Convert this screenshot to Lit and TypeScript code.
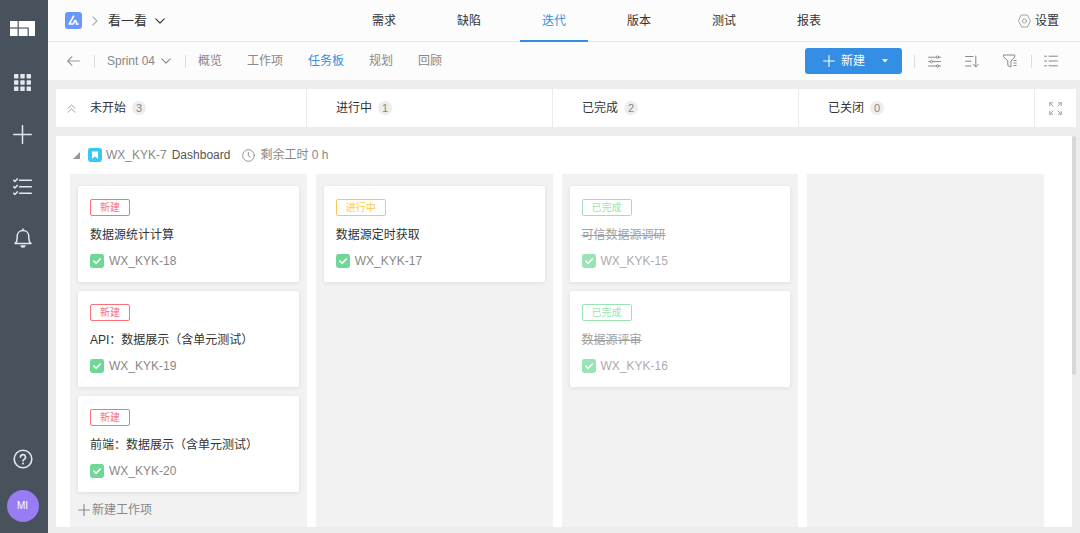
import { LitElement, html, svg, css, nothing } from "lit";
import { customElement, property, state } from "lit/decorators.js";
import { classMap } from "lit/directives/class-map.js";

type Status = "todo" | "doing" | "done";

interface Task {
  key: string;
  title: string;
  status: Status;
}

interface Column {
  name: string;
  tasks: Task[];
}

const STATUS_LABEL: Record<Status, string> = {
  todo: "新建",
  doing: "进行中",
  done: "已完成",
};

const COLUMNS: Column[] = [
  {
    name: "未开始",
    tasks: [
      { key: "WX_KYK-18", title: "数据源统计计算", status: "todo" },
      { key: "WX_KYK-19", title: "API：数据展示（含单元测试）", status: "todo" },
      { key: "WX_KYK-20", title: "前端：数据展示（含单元测试）", status: "todo" },
    ],
  },
  {
    name: "进行中",
    tasks: [{ key: "WX_KYK-17", title: "数据源定时获取", status: "doing" }],
  },
  {
    name: "已完成",
    tasks: [
      { key: "WX_KYK-15", title: "可信数据源调研", status: "done" },
      { key: "WX_KYK-16", title: "数据源评审", status: "done" },
    ],
  },
  { name: "已关闭", tasks: [] },
];

const icon = (w: number, h: number, body: unknown, stroke = 1) => html`
  <svg width=${w} height=${h} viewBox="0 0 ${w} ${h}" fill="none" stroke="currentColor"
    stroke-width=${stroke} stroke-linecap="round" stroke-linejoin="round" aria-hidden="true">${body}</svg>`;

const icons = {
  logo: icon(25, 15, svg`
    <g fill="currentColor" stroke="none">
      <path d="M0 0H7.6V6.4H0z"/><path d="M8.8 0H25V15H18.8V6.4H8.8z"/>
      <path d="M0 7.6H7.6V15H0z"/><path d="M8.8 7.6H17.6V15H8.8z"/>
    </g>`),
  apps: icon(17, 17, svg`
    <g fill="currentColor" stroke="none">
      ${[0, 6.3, 12.6].map((y) => [0, 6.3, 12.6].map((x) => svg`<rect x=${x} y=${y} width="4.4" height="4.4" rx="0.6"/>`))}
    </g>`),
  plus: icon(19, 19, svg`<path d="M9.5 .7V18.3M.7 9.5H18.3"/>`, 1.5),
  checklist: icon(19, 17, svg`
    <path d="M6.5 2.3H18.3M6.5 8.8H18.3M6.5 15.3H18.3"/>
    <path d="M.7 2.2L1.9 3.4L4.2 .9M.7 8.7L1.9 9.9L4.2 7.4M.7 15.2L1.9 16.4L4.2 13.9"/>`, 1.5),
  bell: icon(18, 20, svg`
    <path d="M1 15.6C2.8 14.2 3.2 12.6 3.2 10V8.4C3.2 5 5.6 2.6 9 2.6S14.8 5 14.8 8.4V10C14.8 12.6 15.2 14.2 17 15.6Z"/>
    <path d="M9 2.4V1"/><path d="M6.4 17.2H11.6A2.6 2.5 0 0 1 6.4 17.2Z" fill="currentColor" stroke="none"/>`, 1.5),
  help: icon(20, 20, svg`
    <circle cx="10" cy="10" r="8.8"/>
    <path d="M7.5 8.2A2.5 2.5 0 1 1 11 10.4C10.2 10.8 10 11.1 10 12"/>
    <circle cx="10" cy="14.4" r="1" fill="currentColor" stroke="none"/>`, 1.6),
  product: html`<svg width="17" height="17" viewBox="0 0 17 17" aria-hidden="true">
    <rect width="17" height="17" rx="3" fill="#6698ff"/>
    <path d="M8.6 4.2L4.2 12H8.2L9.8 8.6C11.2 8.6 11.6 9.8 11.4 12H13" fill="none" stroke="#fff"
      stroke-width="1.7" stroke-linecap="round" stroke-linejoin="round"/></svg>`,
  chevronRight: icon(6, 10, svg`<path d="M.8 .8L5 5L.8 9.2"/>`, 1.1),
  chevronDown: icon(10, 6, svg`<path d="M.8 .8L5 5.2L9.2 .8"/>`, 1.1),
  hexagon: icon(13, 14, svg`<path d="M3.6 1H9.4L12.4 7L9.4 13H3.6L.6 7Z"/><circle cx="6.5" cy="7" r="2"/>`, 0.9),
  back: icon(13, 10, svg`<path d="M12.4 5H.8M4.8 .8L.7 5L4.8 9.2"/>`, 1.2),
  addSmall: icon(12, 12, svg`<path d="M6 .6V11.4M.6 6H11.4"/>`, 1.1),
  caret: html`<svg width="6" height="4" viewBox="0 0 6 4" aria-hidden="true"><path d="M0 .2H6L3 3.4Z" fill="currentColor"/></svg>`,
  sliders: icon(13, 13, svg`
    <path d="M.6 2.2H8M11 2.2H12.4M.6 6.6H2M5 6.6H12.4M.6 11H8M11 11H12.4"/>
    <circle cx="9.5" cy="2.2" r="1.2"/><circle cx="3.5" cy="6.6" r="1.2"/><circle cx="9.5" cy="11" r="1.2"/>`),
  sort: icon(14, 13, svg`<path d="M.6 1.5H8M.6 6.2H6M.6 11H6M10.8 1V11.8M8.5 9.4L10.8 12L13.2 9.4"/>`),
  filter: icon(14, 14, svg`<path d="M.8 1H11.8V3L8 7V13L4.8 11.4V7L.8 3ZM10.8 6.5H13.2M10.8 9H13.2M10.8 11.5H13.2"/>`),
  list: icon(14, 12, svg`<path d="M.6 1.2H2.6M5 1.2H13.4M.6 6H2.6M5 6H13.4M.6 10.8H2.6M5 10.8H13.4"/>`),
  collapseAll: icon(9, 9, svg`<path d="M.9 4.3L4.5 1L8.1 4.3M.9 8.3L4.5 5L8.1 8.3"/>`, 0.9),
  expand: icon(13, 13, svg`
    <path d="M.8 3.6V.8H3.6M.8 .8L4.2 4.2M9.4 .8H12.2V3.6M12.2 .8L8.8 4.2M.8 9.4V12.2H3.6M.8 12.2L4.2 8.8M9.4 12.2H12.2V9.4M12.2 12.2L8.8 8.8"/>`, 0.9),
  triangle: html`<svg width="7" height="7" viewBox="0 0 7 7" aria-hidden="true"><path d="M7 0V7H0Z" fill="currentColor"/></svg>`,
  story: html`<svg width="14" height="14" viewBox="0 0 14 14" aria-hidden="true">
    <rect width="14" height="14" rx="2.4" fill="#38c8f5"/><path d="M4 3.4H10V10.8L7 8.6L4 10.8Z" fill="#fff"/></svg>`,
  clock: icon(13, 13, svg`<circle cx="6.5" cy="6.5" r="5.8"/><path d="M6.3 3.4V6.8L8.4 8.2"/>`, 0.9),
  task: html`<svg width="14" height="14" viewBox="0 0 14 14" aria-hidden="true">
    <rect width="14" height="14" rx="2.4" fill="#6fd896"/>
    <path d="M3.8 7L6.2 9.3L10.3 5" fill="none" stroke="#fff" stroke-width="1.6" stroke-linecap="round" stroke-linejoin="round"/></svg>`,
};

const base = css`
  *, *::before, *::after { box-sizing: border-box; }
  svg { display: block; flex: none; }
  button {
    display: flex; align-items: center; justify-content: center;
    margin: 0; padding: 0; border: 0; background: none;
    font: inherit; color: inherit; cursor: pointer;
  }
  a { color: inherit; text-decoration: none; }
  h1, h2, h3 { margin: 0; font: inherit; }
`;

@customElement("side-rail")
class SideRail extends LitElement {
  static styles = [base, css`
    :host { display: block; }
    .rail {
      display: flex; flex-direction: column; align-items: center;
      height: 100%; padding: 21px 3px 11px 0;
      background: #48525d; color: #e3e8ee;
    }
    .logo { color: #fff; margin-bottom: 20px; }
    .item { width: 44px; height: 52px; }
    .help { margin-top: auto; height: 40px; margin-bottom: 11px; }
    .avatar {
      width: 32px; height: 32px; border-radius: 50%;
      background: #997bf3; color: #fff; font-size: 10px;
    }
  `];

  render() {
    return html`
      <nav class="rail" aria-label="主导航">
        <a class="logo" href="#" aria-label="首页">${icons.logo}</a>
        <button class="item" aria-label="应用">${icons.apps}</button>
        <button class="item" aria-label="添加">${icons.plus}</button>
        <button class="item" aria-label="待办">${icons.checklist}</button>
        <button class="item" aria-label="通知">${icons.bell}</button>
        <button class="item help" aria-label="帮助">${icons.help}</button>
        <button class="avatar">MI</button>
      </nav>`;
  }
}

@customElement("page-header")
class PageHeader extends LitElement {
  @state() private section = "迭代";
  @state() private view = "任务板";

  static styles = [base, css`
    :host { display: block; background: #fcfcfc; color: #333; }
    .top {
      display: flex; justify-content: space-between; align-items: center;
      height: 42px; padding: 0 21px 0 17px; border-bottom: 1px solid #e9e9e9;
    }
    .crumbs { display: flex; align-items: center; gap: 10px; padding-right: 10px; }
    .sep { color: #aaa; }
    .project { gap: 8px; font-size: 13px; }
    .tabs { display: flex; gap: 17px; align-self: stretch; margin-bottom: -1px; }
    .tab {
      display: flex; align-items: center; justify-content: center;
      width: 68px; padding-top: 2px; border-bottom: 2px solid transparent;
    }
    .tab.on { color: #348fe4; border-color: #348fe4; }
    .settings { gap: 4px; }
    .settings svg { color: #999; }
    .sub {
      display: flex; align-items: center; height: 38px;
      padding: 0 22px 0 19px; color: #888;
    }
    .rule { width: 1px; height: 13px; background: #ddd; }
    .back { margin-right: 14px; color: #999; }
    .sprint { gap: 6px; margin: 0 14px 0 12px; }
    .views { display: flex; gap: 25px; margin-left: 12px; }
    .view.on { color: #348fe4; }
    .tools { display: flex; align-items: center; margin-left: auto; color: #888; }
    .create { display: flex; height: 26px; margin-right: 12px; border-radius: 3px; background: #348fe4; color: #fff; }
    .new { gap: 6px; padding: 0 3px 0 18px; }
    .more { width: 34px; }
    .group { display: flex; gap: 24px; margin: 0 14px 0 13px; }
    .list { margin-left: 12px; }
  `];

  private pick(e: Event, key: "section" | "view", value: string) {
    e.preventDefault();
    this[key] = value;
  }

  render() {
    return html`
      <header class="top">
        <div class="crumbs">
          <a href="#" aria-label="产品">${icons.product}</a>
          <span class="sep">${icons.chevronRight}</span>
          <button class="project">看一看 ${icons.chevronDown}</button>
        </div>
        <nav class="tabs">
          ${["需求", "缺陷", "迭代", "版本", "测试", "报表"].map((t) => html`
            <a href="#" class=${classMap({ tab: true, on: t === this.section })}
              @click=${(e: Event) => this.pick(e, "section", t)}>${t}</a>`)}
        </nav>
        <button class="settings">${icons.hexagon} 设置</button>
      </header>
      <div class="sub">
        <button class="back" aria-label="返回">${icons.back}</button>
        <span class="rule"></span>
        <button class="sprint">Sprint 04 ${icons.chevronDown}</button>
        <span class="rule"></span>
        <nav class="views">
          ${["概览", "工作项", "任务板", "规划", "回顾"].map((t) => html`
            <a href="#" class=${classMap({ view: true, on: t === this.view })}
              @click=${(e: Event) => this.pick(e, "view", t)}>${t}</a>`)}
        </nav>
        <div class="tools">
          <div class="create">
            <button class="new">${icons.addSmall} 新建</button>
            <button class="more" aria-label="更多新建选项">${icons.caret}</button>
          </div>
          <span class="rule"></span>
          <div class="group">
            <button aria-label="显示设置">${icons.sliders}</button>
            <button aria-label="排序">${icons.sort}</button>
            <button aria-label="筛选">${icons.filter}</button>
          </div>
          <span class="rule"></span>
          <button class="list" aria-label="列表视图">${icons.list}</button>
        </div>
      </div>`;
  }
}

@customElement("task-card")
class TaskCard extends LitElement {
  @property({ attribute: false }) task!: Task;

  static styles = [base, css`
    :host { display: block; }
    .card {
      display: flex; flex-direction: column; align-items: flex-start;
      height: 96px; padding: 13px 12px 0;
      background: #fff; border-radius: 2px; box-shadow: 0 1px 5px rgba(0, 0, 0, 0.09);
    }
    .tag {
      height: 17px; padding: 0 9px; border: 1px solid; border-radius: 2px;
      font-size: 10px; line-height: 15px;
    }
    .tag.todo { color: #f8707a; }
    .tag.doing { color: #f9c752; }
    .tag.done { color: #6fd896; }
    .title { margin: 10px 0 9px; line-height: 18px; color: #333; white-space: nowrap; }
    .meta { display: flex; align-items: center; gap: 5px; line-height: 16px; color: #888; }
    .finished > * { opacity: 0.7; }
    .finished .title { color: #777; text-decoration: line-through; }
  `];

  render() {
    const { key, title, status } = this.task;
    return html`
      <article class=${classMap({ card: true, finished: status === "done" })}>
        <span class=${classMap({ tag: true, [status]: true })}>${STATUS_LABEL[status]}</span>
        <h3 class="title">${title}</h3>
        <div class="meta">${icons.task}<span>${key}</span></div>
      </article>`;
  }
}

@customElement("task-board")
class TaskBoard extends LitElement {
  @property({ attribute: false }) columns: Column[] = [];

  static styles = [base, css`
    :host { display: flex; flex-direction: column; gap: 9px; min-height: 0; padding: 9px 4px 6px 8px; }
    .heads { display: flex; height: 38px; background: #fff; }
    .head {
      display: flex; align-items: center; gap: 6px;
      flex: 1 1 40px; padding-left: 29px; border-left: 1px solid #ececec;
    }
    .head:first-child { flex-basis: 44px; padding-left: 11px; border-left: 0; }
    .head:nth-child(4) { flex-basis: 30px; }
    .collapse { width: 9px; margin-right: 8px; color: #999; }
    .name { color: #333; }
    .count {
      min-width: 14px; height: 14px; padding: 0 4px; border-radius: 7px;
      background: #ededed; color: #888; font-size: 11px; line-height: 14px; text-align: center;
    }
    .full { flex: none; width: 42px; border-left: 1px solid #ececec; color: #999; }
    .body { display: flex; flex: 1; min-height: 0; }
    .panel {
      display: flex; flex-direction: column; flex: 1; min-width: 0;
      padding: 0 28px 0 14px; background: #fff; overflow: hidden;
    }
    .lane { display: flex; align-items: center; flex: none; height: 38px; padding-left: 3px; color: #888; }
    .toggle { margin-right: 8px; color: #999; }
    .key { margin: 0 5px 0 4px; }
    .story { margin-right: 12px; color: #555; }
    .left { margin-left: 5px; }
    .cols { display: grid; grid-template-columns: repeat(4, minmax(0, 1fr)); gap: 9px; flex: 1; }
    .col { display: flex; flex-direction: column; gap: 9px; padding: 12px 8px 8px; background: #f2f2f2; }
    .add { align-self: flex-start; gap: 2px; height: 18px; color: #888; }
    .track { flex: none; width: 4px; }
    .thumb { height: 61%; border-radius: 2px; background: #d8d8d8; }
  `];

  render() {
    return html`
      <div class="heads">
        ${this.columns.map((c, i) => html`
          <div class="head">
            ${i === 0 ? html`<button class="collapse" aria-label="全部收起">${icons.collapseAll}</button>` : nothing}
            <h2 class="name">${c.name}</h2><span class="count">${c.tasks.length}</span>
          </div>`)}
        <button class="full" aria-label="全屏">${icons.expand}</button>
      </div>
      <div class="body">
        <section class="panel">
          <div class="lane">
            <button class="toggle" aria-label="收起">${icons.triangle}</button>
            ${icons.story}
            <span class="key">WX_KYK-7</span>
            <h2 class="story">Dashboard</h2>
            ${icons.clock}
            <span class="left">剩余工时 0 h</span>
          </div>
          <div class="cols">
            ${this.columns.map((c, i) => html`
              <div class="col">
                ${c.tasks.map((t) => html`<task-card .task=${t}></task-card>`)}
                ${i === 0 ? html`<button class="add">${icons.addSmall} 新建工作项</button>` : nothing}
              </div>`)}
          </div>
        </section>
        <div class="track"><div class="thumb"></div></div>
      </div>`;
  }
}

@customElement("app-root")
class AppRoot extends LitElement {
  static styles = css`
    :host {
      display: grid; grid-template-columns: 48px minmax(0, 1fr); height: 100vh;
      background: #ededed;
      font: 12px/18px "Liberation Sans", "Noto Sans CJK SC", sans-serif;
    }
    .main { display: flex; flex-direction: column; min-height: 0; }
    .board { flex: 1; }
  `;

  render() {
    return html`
      <side-rail></side-rail>
      <main class="main">
        <page-header></page-header>
        <task-board class="board" .columns=${COLUMNS}></task-board>
      </main>`;
  }
}
